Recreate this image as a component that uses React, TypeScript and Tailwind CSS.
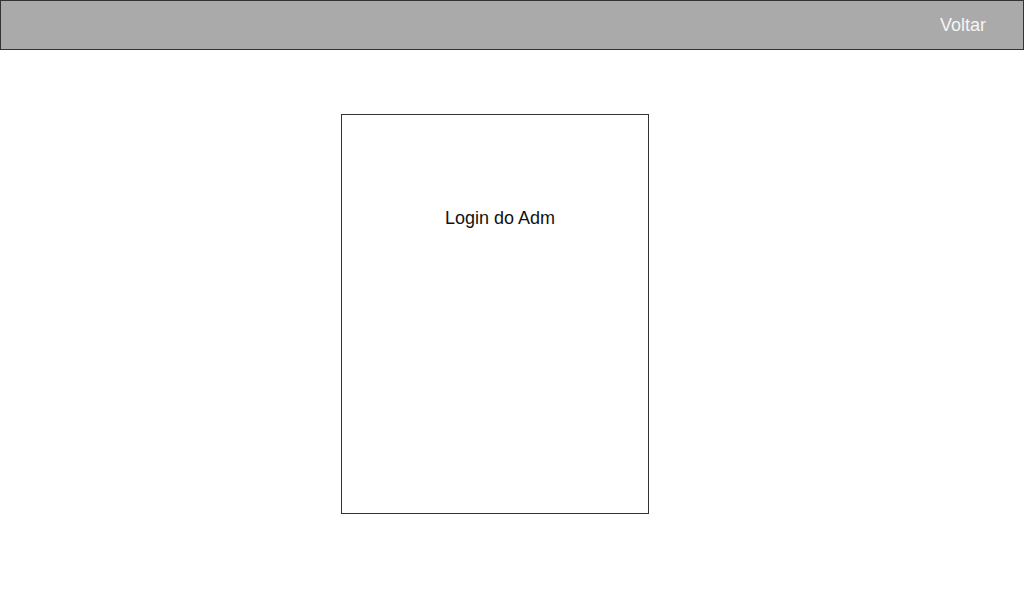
export default function App() {
  return (
    <div className="min-h-[600px] w-[1024px] bg-white font-['Liberation_Sans',Arial,sans-serif]">
      <header className="flex h-[50px] items-center justify-end border border-[#333333] bg-[#aaaaaa] pr-[37px]">
        <button className="text-[18px] leading-[22px] text-[#f5f5f5]">Voltar</button>
      </header>

      <div className="ml-[341px] mt-[64px] h-[400px] w-[308px] border border-[#333333]">
        <div className="flex justify-center pl-[10px] pt-[92px]">
          <h1 className="text-[18px] leading-[22px] text-[#111111]">Login do Adm</h1>
        </div>
      </div>
    </div>
  );
}
